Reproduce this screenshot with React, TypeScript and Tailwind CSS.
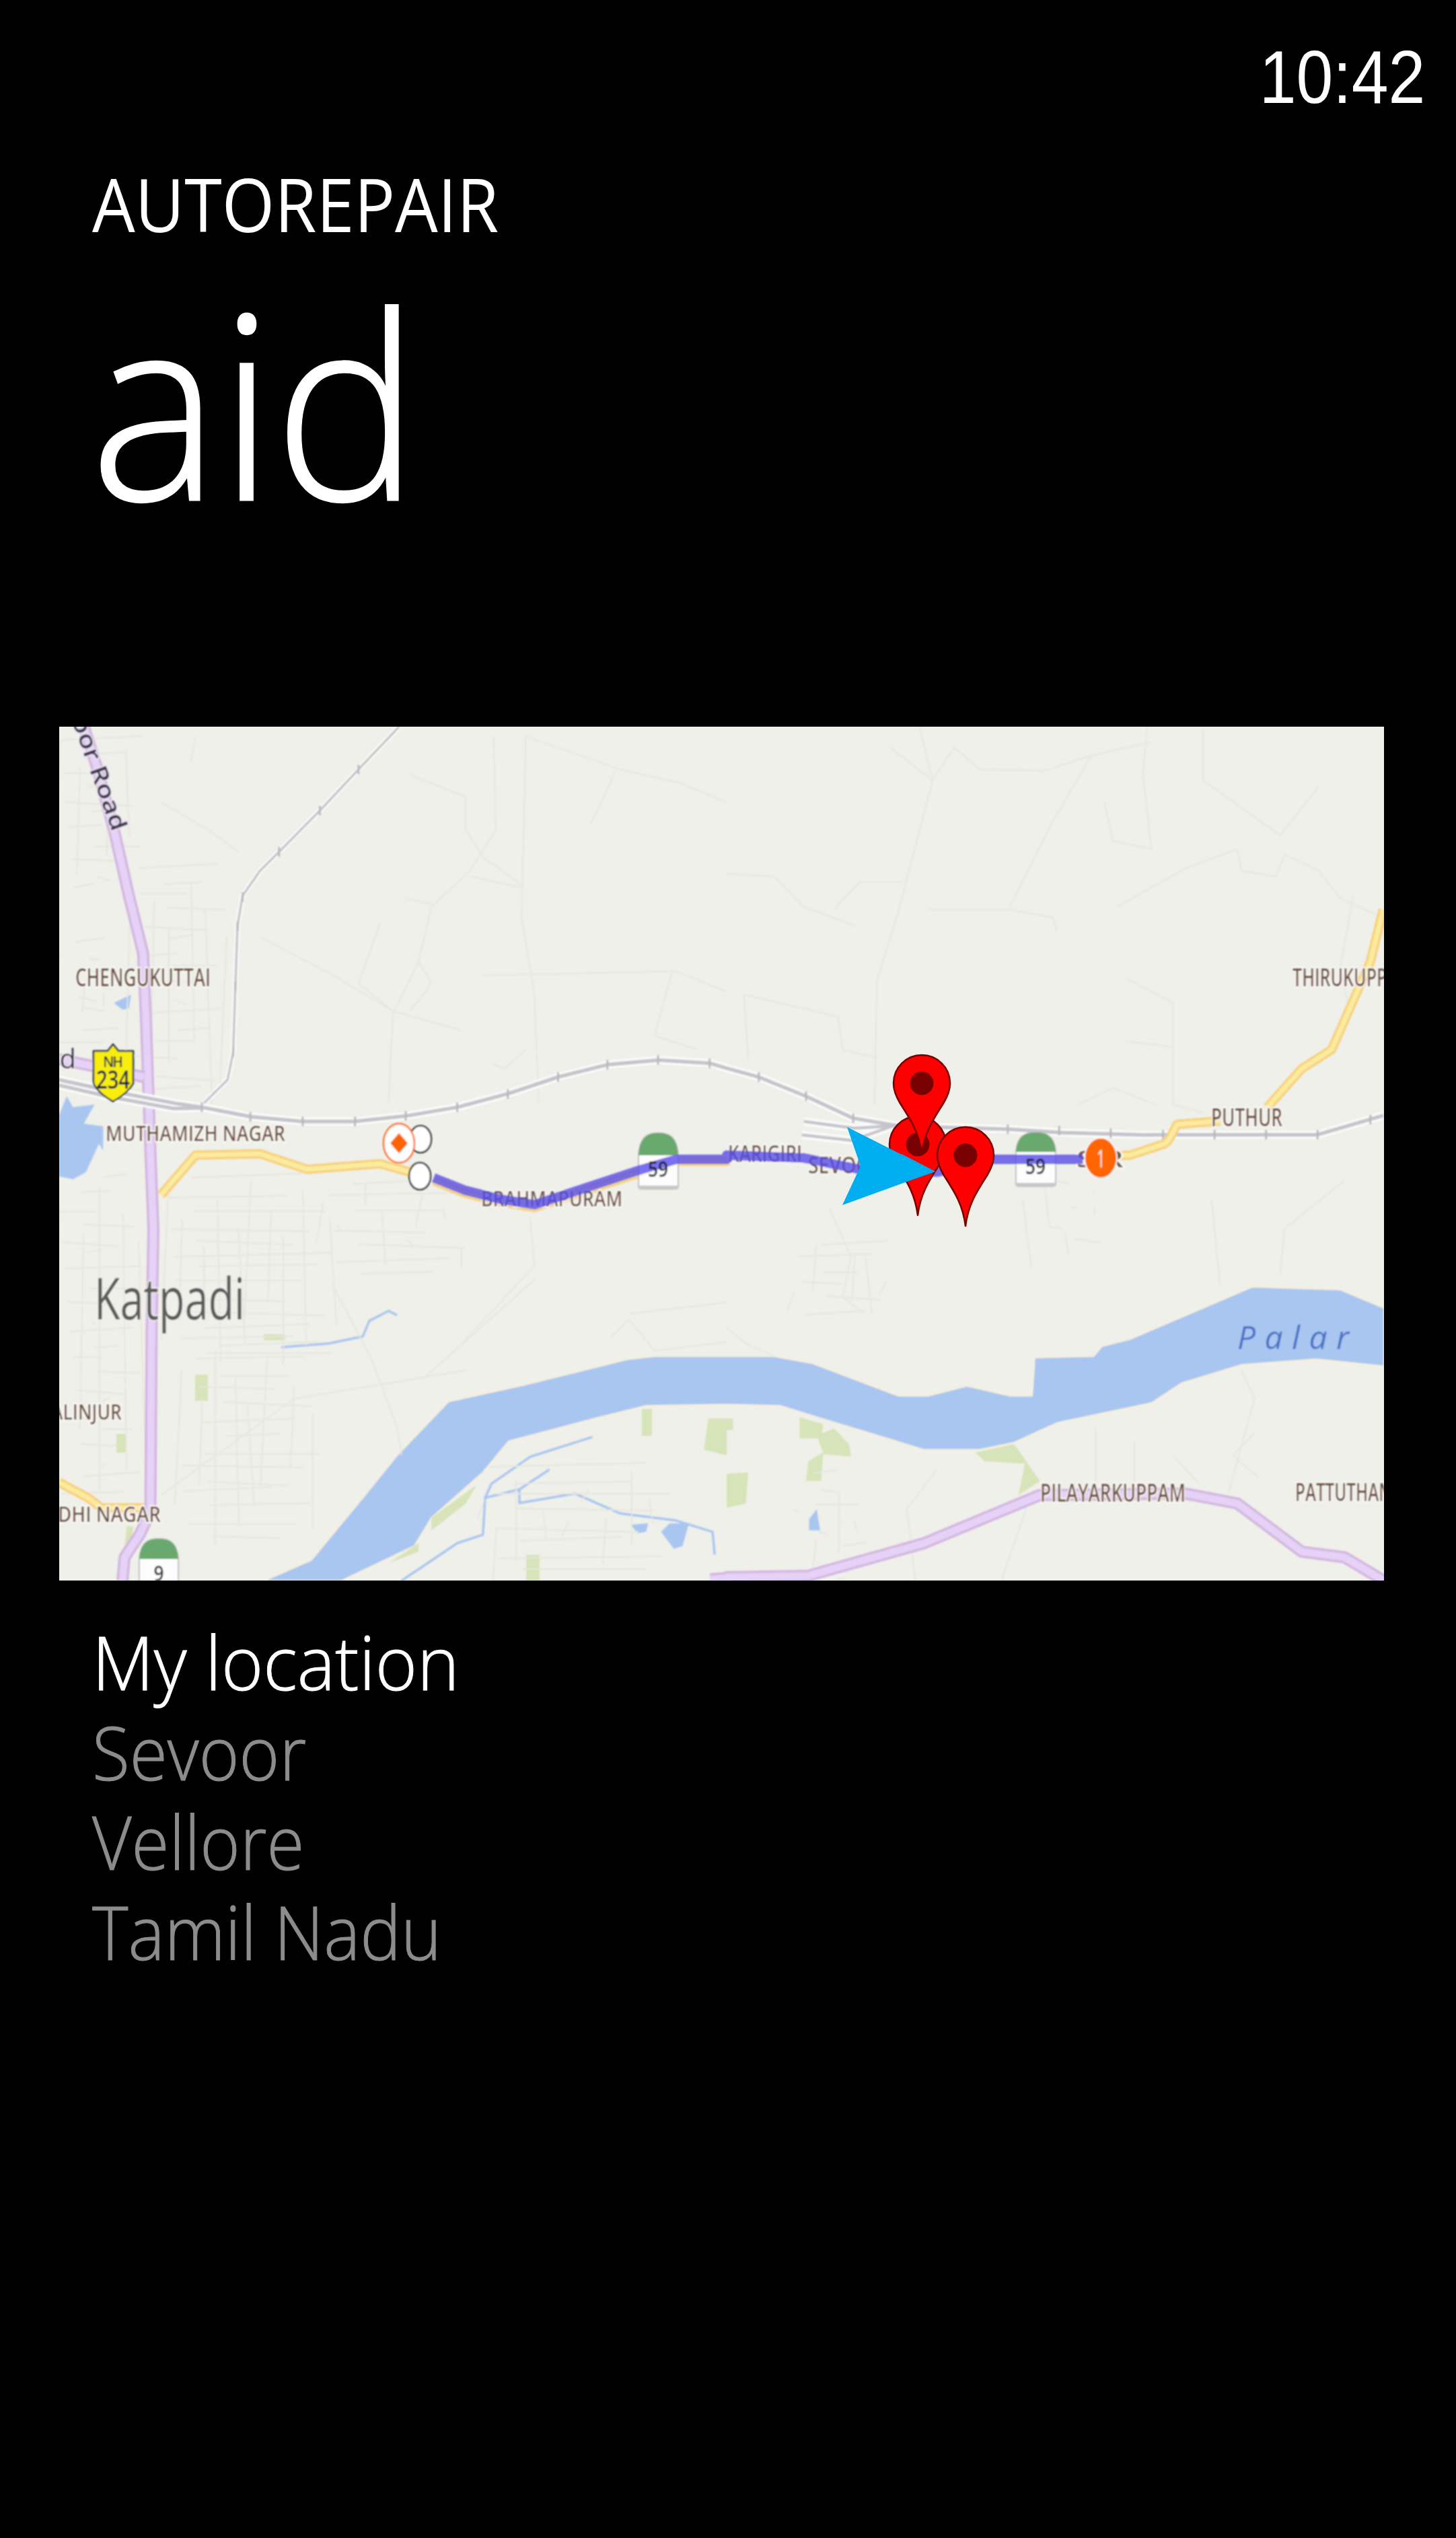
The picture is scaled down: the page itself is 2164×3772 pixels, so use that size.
import React from "react";

const Z: Record<string, [number, number, number, number]> = {
  "1": [80, 1070, 0.6378, 0.4082],
  "2": [1080, 1070, 0.6378, 0.4082],
  "3": [80, 1700, 0.6378, 0.4209],
  "4": [1080, 1700, 0.6378, 0.4209],
  "5": [1180, 1540, 1 / 3, 1 / 3],
};

function pt(zone: string, t: string): [number, number] {
  const [a, b] = t.split(",").map(Number);
  const z = Z[zone];
  return [+(z[0] + a * z[2]).toFixed(1), +(z[1] + b * z[3]).toFixed(1)];
}

function path(spec: string, close = false): string {
  let zone = "1";
  const out: string[] = [];
  spec.trim().split(/\s+/).forEach((tok) => {
    let t = tok;
    if (t.includes(":")) {
      const s = t.split(":");
      zone = s[0];
      t = s[1];
    }
    const [x, y] = pt(zone, t);
    out.push(`${out.length ? "L" : "M"}${x} ${y}`);
  });
  return out.join(" ") + (close ? " Z" : "");
}

const FAINT = [
  "1:1100,60 1320,180 1460,230 1568,300",
  "1:830,200 960,280 960,400 1000,500 1090,600",
  "1:970,570 1090,610",
  "1:480,790 640,920 790,1060 950,1130",
  "1:1000,930 1450,915 1568,990",
  "1:1025,60 1030,400 970,550 880,680 850,880 790,1070 780,1400",
  "1:1100,60 1090,720 1120,1000 1130,1400",
  "1:330,60 320,150",
  "1:430,480 360,400 250,300",
  "1:880,670 820,650",
  "1:760,740 710,960 790,1060",
  "1:850,880 880,960 830,1060",
  "1:1440,920 1400,1150 1500,1200",
  "1:1310,180 1270,320 1250,380",
  "1:1020,1250 1050,1270 1100,1200",
  "2:450,30 480,220 400,700 350,950 345,1400",
  "2:380,100 480,220 530,100 590,180 740,185 850,130 990,80",
  "2:980,30 970,200 990,470 900,440 880,300",
  "2:850,130 760,370 660,680",
  "2:470,690 660,690 760,720 770,770",
  "2:910,680 1070,540 1190,470 1200,550 1280,570 1300,490 1380,550 1430,650 1530,720",
  "2:1110,30 1110,220 1290,420 1380,240",
  "2:0,560 110,570 180,680 300,750",
  "2:250,690 310,590 410,590",
  "2:40,1000 260,1080 270,1200 350,1230",
  "2:40,1000 50,1230",
  "2:930,940 1040,1030 1040,1400 1110,1430",
  "2:930,1170 1040,1190",
  "2:820,1400 900,1340 1000,1400",
  "2:1460,640 1430,900 1450,1050",
  "3:930,740 1120,430 1110,260",
  "3:1340,600 1568,560",
  "3:1300,680 1340,620 1400,730 1568,700",
  "3:860,830 1120,480",
  "3:250,1240 560,900 960,800",
  "3:650,500 740,760 800,1000 810,1100",
  "4:240,230 290,400 270,540 320,600",
  "4:1130,200 1150,500",
  "4:1290,460 1300,300 1440,130",
  "4:690,200 710,440",
  "4:0,650 50,710 110,750",
  "4:1200,800 1230,900 1170,1230",
  "4:860,1000 860,1200",
  "4:950,1050 950,1200",
  "4:1040,1100 1100,1200",
  "4:490,1150 420,1290 440,1543",
  "4:660,1300 700,1280 640,1543",
  "4:1230,1020 1180,1100 1240,1180",
];

const TOWNS: [number, number, number, number][] = [
  [90, 1100, 210, 1330],
  [195, 1290, 340, 1650],
  [88, 1400, 190, 1560],
  [250, 1750, 500, 2030],
  [480, 1760, 690, 1900],
  [270, 2000, 480, 2300],
  [88, 1750, 210, 2230],
  [720, 2180, 1000, 2349],
  [1190, 2190, 1300, 2349],
  [1560, 1760, 1640, 1860],
  [1180, 1850, 1330, 1960],
];

const TICKS = [
  "1:710,180", "1:620,330", "1:525,480", "1:440,645", "1:428,750", "1:423,970", "1:418,1210",
  "1:345,1410", "1:458,1445", "1:580,1462", "1:702,1462", "1:820,1442", "1:940,1410", "1:1058,1362",
  "1:1175,1300", "1:1290,1255", "1:1408,1238", "1:1528,1250", "2:75,1300", "2:185,1370", "2:295,1450",
  "2:655,1490", "2:775,1495", "2:895,1505", "2:1017,1510", "2:1137,1510", "2:1257,1510", "2:1377,1510", "2:1500,1455",
];

const SANS = "'Open Sans','Noto Sans',sans-serif";

function Label({ x, y, w, t, s = 35, fill = "#6f5140", weight = 600 }: { x: number; y: number; w: number; t: string; s?: number; fill?: string; weight?: number }) {
  return (
    <text
      x={x}
      y={y}
      textLength={w}
      lengthAdjust="spacingAndGlyphs"
      fontFamily={SANS}
      fontSize={s}
      fontWeight={weight}
      fill={fill}
      stroke="#fbfbf8"
      strokeWidth={4}
      paintOrder="stroke"
    >
      {t}
    </text>
  );
}

function Dome({ x, top, green, bottom, w = 59 }: { x: number; top: number; green: number; bottom: number; w?: number }) {
  const cx = x + w / 2;
  return (
    <g>
      <path d={`M${x} ${green} C${x + 2} ${top + 4} ${cx - 14} ${top} ${cx} ${top} C${cx + 14} ${top} ${x + w - 2} ${top + 4} ${x + w} ${green} L${x + w} ${bottom - 4} Q${x + w} ${bottom} ${x + w - 4} ${bottom} L${x + 4} ${bottom} Q${x} ${bottom} ${x} ${bottom - 4} Z`} fill="#fdfdfd" stroke="#bfbfc2" strokeWidth="2" />
      <path d={`M${x} ${green} C${x + 2} ${top + 4} ${cx - 14} ${top} ${cx} ${top} C${cx + 14} ${top} ${x + w - 2} ${top + 4} ${x + w} ${green} Z`} fill="#6aa96e" />
      <rect x={x} y={bottom - 5} width={w} height={5} fill="#c8c8cb" />
    </g>
  );
}

function DomeNumber({ x, y, label }: { x: number; y: number; label: string }) {
  return (
    <text x={x} y={y} textAnchor="middle" fontFamily={SANS} fontSize="33" fontWeight="600" fill="#1b1b22" textLength={label.length > 1 ? 30 : 15} lengthAdjust="spacingAndGlyphs">
      {label}
    </text>
  );
}

function Pin({ x, y }: { x: number; y: number }) {
  return (
    <g transform={`translate(${x} ${y})`}>
      <path d="M0 105 C-4 72 -18 52 -32 30 C-38 20 -42 10 -42 0 A42 42 0 1 1 42 0 C42 10 38 20 32 30 C18 52 4 72 0 105 Z" fill="#ff0000" stroke="#7a0000" strokeWidth="2.6" strokeLinejoin="round" />
      <circle cx="0" cy="0" r="17.5" fill="#780000" />
    </g>
  );
}

function MapArt() {
  const towns: React.ReactNode[] = [];
  TOWNS.forEach(([x0, y0, x1, y1], i) => {
    for (let k = 0, y = y0; y < y1; k++, y += 14 + (k * 7 + i * 3) % 17) {
      const a = x0 + ((k * 37 + i * 11) % 70);
      const b = x1 - ((k * 23 + i * 17) % 80);
      towns.push(<path key={`h${i}-${k}`} d={`M${a} ${y} L${b} ${y + ((k % 5) - 2) * 3}`} />);
    }
    for (let k = 0, x = x0; x < x1; k++, x += 18 + (k * 11 + i * 5) % 23) {
      const a = y0 + ((k * 41 + i * 7) % 110);
      const b = y1 - ((k * 29 + i * 13) % 120);
      towns.push(<path key={`v${i}-${k}`} d={`M${x} ${a} L${x + ((k % 5) - 2) * 5} ${b}`} />);
    }
  });

  const pink = (d: string, key: string) => (
    <g key={key} fill="none" strokeLinejoin="round" strokeLinecap="butt">
      <path d={d} stroke="#d3b6e0" strokeWidth="18" />
      <path d={d} stroke="#e5d2f6" strokeWidth="11" />
    </g>
  );
  const yellow = (d: string, key: string) => (
    <g key={key} fill="none" strokeLinejoin="round">
      <path d={d} stroke="#f6d180" strokeWidth="14" />
      <path d={d} stroke="#fceb9e" strokeWidth="7" />
    </g>
  );
  const grey = (d: string, key: string, w = 5.5) => (
    <path key={key} d={d} fill="none" stroke="#c4c4cc" strokeWidth={w} strokeLinejoin="round" />
  );
  const halo = (d: string, key: string, w = 12) => (
    <path key={key} d={d} fill="none" stroke="#fbfbf9" strokeWidth={w} strokeLinejoin="round" />
  );

  const thin = path("1:805,24 710,180 620,330 525,480 480,550 440,640 428,750 423,970 418,1210 405,1310 350,1395");
  const main1 = path("1:12,1310 130,1350 280,1395 345,1410 460,1445 580,1462 700,1462 820,1442 940,1410 1060,1360 1175,1300 1290,1255 1410,1238 1530,1250 1568,1268 2:75,1300 185,1370 295,1450 400,1478");
  const main1b = path("1:12,1330 130,1372 280,1415 345,1412");
  const main2 = path("5:440,400 960,415 1190,430 1560,440 2:1017,1510 1377,1510 1530,1440");
  const sid1 = path("5:45,380 270,410 440,400");
  const sid2 = path("5:35,440 260,465 440,400");
  const sid3 = path("2:185,1370 295,1450 440,1490");

  const route = path("3:885,120 960,165 1040,195 1120,215 1370,90 1450,55 1568,55 4:0,40 180,50 310,90 490,100 620,55 830,55");

  return (
    <svg viewBox="88 1080 1969 1269" width="1969" height="1269" className="block" xmlns="http://www.w3.org/2000/svg">
      <defs>
        <filter id="soft" x="0" y="0" width="1" height="1">
          <feGaussianBlur stdDeviation="0.9" />
        </filter>
      </defs>
      <rect x="88" y="1080" width="1969" height="1269" fill="#f0f0ea" />
      <g filter="url(#soft)">
        <path
          d={path("3:490,1543 600,1470 720,1250 800,1100 920,910 1100,850 1340,760 1400,750 1568,750 4:0,750 110,750 200,775 400,890 470,890 560,855 660,890 712,890 718,755 855,750 875,715 940,690 1225,505 1430,515 1532,580 1532,785 1375,760 1200,780 1060,845 990,915 770,985 670,1055 590,1080 460,1080 200,960 125,925 0,920 3:1568,920 1380,925 1260,970 1060,1050 1000,1160 880,1320 840,1420 670,1543", true)}
          fill="#a9c6f0"
          stroke="#f7efd9"
          strokeWidth="2"
        />
        <path d={path("1:12,1440 30,1370 45,1410 95,1400 70,1470 115,1480 115,1568 3:105,0 75,100 45,125 12,115", true)} fill="#a9c6f0" />
        <path d={path("1:140,1030 180,1000 175,1050 160,1055", true)} fill="#a9c6f0" />
        <path d={path("4:192,1365 192,1325 210,1290 218,1365", true)} fill="#a9c6f0" />
        <path d={path("3:1345,1345 1385,1340 1380,1370 1360,1375", true)} fill="#a9c6f0" />
        <path d={path("3:1415,1370 1435,1340 1480,1340 1465,1420 1445,1430", true)} fill="#a9c6f0" />
        <g fill="none" stroke="#a9c6f0" strokeWidth="3.5" strokeLinejoin="round">
          <path d={path("3:530,718 640,705 720,680 735,625 780,590 800,605")} />
          <path d={path("3:810,1543 940,1410 1000,1380 1005,1250 1020,1200 1110,1105 1255,1035")} />
          <path d={path("3:1005,1250 1085,1220 1155,1150")} />
          <path d={path("3:1085,1220 1085,1268 1215,1235 1320,1305 1450,1330 1535,1370 1540,1450")} />
        </g>
        <g fill="#d7e3b8">
          <rect x="392" y="1983" width="32" height="9" />
          <rect x="290" y="2043" width="19" height="39" />
          <rect x="173" y="2131" width="15" height="28" />
          <path d={path("3:165,1420 170,1350 185,1350 180,1420", true)} />
          <path d={path("3:880,1365 880,1320 985,1205 960,1270", true)} />
          <path d={path("3:780,1480 850,1410 850,1440", true)} />
          <rect x="782" y="2311" width="20" height="38" />
          <rect x="954" y="2094" width="15" height="40" />
          <path d={path("3:1515,1080 1525,970 1568,970 1568,1100", true)} />
          <path d={path("4:0,970 15,970 15,1010 0,1010", true)} />
          <path d={path("4:170,965 225,990 220,1040 170,1040", true)} />
          <path d={path("4:185,1190 190,1120 225,1090 210,1030 250,1005 285,1060 290,1105 225,1095 220,1190", true)} />
          <path d={path("4:0,1165 50,1160 45,1270 0,1285", true)} />
          <path d={path("4:580,1090 670,1060 730,1190 680,1240 695,1130 600,1120", true)} />
        </g>
        <g fill="none" stroke="#e6e6e0" strokeWidth="1.8">
          {towns}
          {FAINT.map((f, i) => (
            <path key={i} d={path(f)} strokeLinejoin="round" />
          ))}
        </g>
        {pink(path("1:70,24 100,170 140,400 175,640 208,850 215,1100 225,1568 3:232,300 228,650 225,1300 200,1380 165,1460 160,1543"), "p1")}
        {pink(path("1:12,1235 90,1260 210,1300"), "p2")}
        {pink(path("3:1530,1538 1568,1533 4:0,1530 190,1525 460,1410 730,1240 1070,1235 1190,1270 1340,1440 1440,1460 1532,1543"), "p3")}
        {halo(thin, "h0", 8)}
        {halo(main1, "h1")}
        {halo(main1b, "h1b")}
        {halo(main2, "h2")}
        {halo(sid1, "h3")}
        {halo(sid2, "h4")}
        {grey(thin, "g0", 3.5)}
        {grey(main1, "g1")}
        {grey(main1b, "g1b")}
        {grey(main2, "g2")}
        {grey(sid1, "g3", 4.5)}
        {grey(sid2, "g4", 4.5)}
        {grey(sid3, "g5", 4.5)}
        {TICKS.map((t, i) => {
          const [zone, v] = t.split(":");
          const [x, y] = pt(zone, v);
          return <path key={i} d={`M${x} ${y - 7} V${y + 7}`} stroke="#b8b8c0" strokeWidth="3" />;
        })}
        {yellow(path("3:250,180 330,40 480,35 590,90 760,70 830,100"), "y1")}
        {yellow(path("3:885,130 960,175 1040,205 1120,225 1370,100 1450,62 1568,62 4:0,48"), "y1b")}
        {yellow(path("2:1530,690 1500,880 1410,1200 1340,1270 1260,1410"), "y2")}
        {yellow(path("2:1150,1460 1050,1472 1030,1530 4:1020,0 940,40 830,48"), "y3")}
        {yellow(path("3:12,1195 80,1250 110,1285 210,1285"), "y4")}

        <text x="0" y="0" transform="translate(106 1070) rotate(70)" fontFamily={SANS} fontSize="34" fontWeight="600" fill="#37324a" stroke="#f4eefa" strokeWidth="3" paintOrder="stroke" textLength="178" lengthAdjust="spacingAndGlyphs">
          oor Road
        </text>
        <text x="113" y="1588" textAnchor="end" fontFamily={SANS} fontSize="40" fontWeight="500" fill="#2c2833" stroke="#f4eefa" strokeWidth="3" paintOrder="stroke">
          ad
        </text>
        <Label x={112} y={1466} w={201} t="CHENGUKUTTAI" s={37} />
        <Label x={157} y={1696} w={267} t="MUTHAMIZH NAGAR" s={32} />
        <Label x={1921} y={1466} w={180} t="THIRUKUPPAM" s={37} />
        <Label x={1800} y={1674} w={106} t="PUTHUR" s={37} />
        <Label x={1082} y={1727} w={110} t="KARIGIRI" s={34} />
        <Label x={1201} y={1744} w={112} t="SEVOOR" s={34} />
        <Label x={715} y={1793} w={210} t="BRAHMAPURAM" s={33} />
        <Label x={76} y={2110} w={105} t="ALINJUR" s={33} />
        <Label x={86} y={2262} w={153} t="DHI NAGAR" s={33} />
        <Label x={1546} y={2232} w={216} t="PILAYARKUPPAM" s={37} />
        <Label x={1925} y={2231} w={190} t="PATTUTHANGAL" s={37} />
        <Label x={1600} y={1735} w={70} t="S    R" s={34} />
        <text x="140" y="1961" textLength="224" lengthAdjust="spacingAndGlyphs" fontFamily={SANS} fontSize="86" fontWeight="400" fill="#5b5b5b" stroke="#f6f6f2" strokeWidth="3" paintOrder="stroke">
          Katpadi
        </text>
        <text x="1839" y="2005" textLength="166" fontFamily={SANS} fontSize="48" fontStyle="italic" fontWeight="500" fill="#4a72c4">
          Palar
        </text>

        <path d="M139 1562 L160 1562 L168 1552 L176 1562 L198 1562 L198 1610 Q190 1625 168 1637 Q146 1625 139 1610 Z" fill="#f8ee08" stroke="#1d2a4a" strokeWidth="2.5" strokeLinejoin="round" />
        <text x="168" y="1586" textAnchor="middle" fontFamily={SANS} fontSize="21" fontWeight="600" fill="#10204f" textLength="30" lengthAdjust="spacing">
          NH
        </text>
        <text x="168" y="1618" textAnchor="middle" fontFamily={SANS} fontSize="38" fontWeight="600" fill="#10204f" textLength="50" lengthAdjust="spacingAndGlyphs">
          234
        </text>
        <Dome x={949} top={1684} green={1717} bottom={1767} />
        <Dome x={1510} top={1683} green={1712} bottom={1763} />
        <Dome x={207} top={2287} green={2317} bottom={2370} w={58} />

        <path d={route} fill="none" stroke="#574ee8" strokeWidth="14" strokeLinejoin="round" opacity="0.8" />

        <DomeNumber x={978} y={1749} label="59" />
        <DomeNumber x={1539} y={1745} label="59" />
        <DomeNumber x={236} y={2350} label="9" />

        <ellipse cx="625" cy="1693" rx="16" ry="20" fill="#ffffff" stroke="#333333" strokeWidth="2.5" />
        <ellipse cx="624" cy="1748" rx="16" ry="20" fill="#ffffff" stroke="#333333" strokeWidth="2.5" />
        <ellipse cx="593" cy="1699" rx="23" ry="29" fill="#ffffff" stroke="#ff6a13" strokeWidth="2.5" />
        <path d="M593 1684 L606 1699 L593 1714 L580 1699 Z" fill="#ff6200" />
        <ellipse cx="1636" cy="1721" rx="24" ry="30" fill="#ff6500" stroke="#fbfbf8" strokeWidth="2" />
        <text x="1636" y="1735" textAnchor="middle" fontFamily={SANS} fontSize="36" fontWeight="500" fill="#ffffff" textLength="12" lengthAdjust="spacingAndGlyphs">
          1
        </text>
      </g>

      <Pin x={1364} y={1701} />
      <Pin x={1370} y={1610} />
      <path d="M1259 1675 L1390 1741 L1252 1791 L1279 1733 Z" fill="#00aeef" />
      <Pin x={1435} y={1717} />
      <path d="M1340 1715 L1390 1741 L1362 1751 Z" fill="#00aeef" />
    </svg>
  );
}

export default function App() {
  return (
    <div className="w-[2164px] h-[3772px] bg-black text-white overflow-hidden flex flex-col [font-family:'Open_Sans','Noto_Sans',sans-serif] font-light">
      <div className="flex justify-end pt-[59px] pr-[46px]">
        <span className="inline-block origin-right scale-x-[0.88] text-[112px] leading-[112px] font-normal [font-family:'Liberation_Sans',Arial,sans-serif]">10:42</span>
      </div>
      <div className="mt-[77px] pl-[137px] text-[109px] leading-[110px] font-normal">
        <span className="inline-block origin-left scale-x-[0.925]">AUTOREPAIR</span>
      </div>
      <div className="mt-[48px] pl-[134px] text-[381px] leading-[380px]">
        <span className="inline-block origin-left scale-x-[0.95] [-webkit-text-stroke:3px_white]">aid</span>
      </div>
      <div className="mt-[294px] ml-[88px] w-[1969px] h-[1269px]">
        <MapArt />
      </div>
      <div className="mt-[54px] pl-[137px] text-[111px] leading-[133.5px] text-[#8c8c8c] [-webkit-text-stroke:1px_currentColor]">
        <div className="text-white"><span className="inline-block origin-left scale-x-[0.957]">My location</span></div>
        <div><span className="inline-block origin-left scale-x-[0.92]">Sevoor</span></div>
        <div><span className="inline-block origin-left scale-x-[0.915]">Vellore</span></div>
        <div><span className="inline-block origin-left scale-x-[0.92]">Tamil Nadu</span></div>
      </div>
    </div>
  );
}
